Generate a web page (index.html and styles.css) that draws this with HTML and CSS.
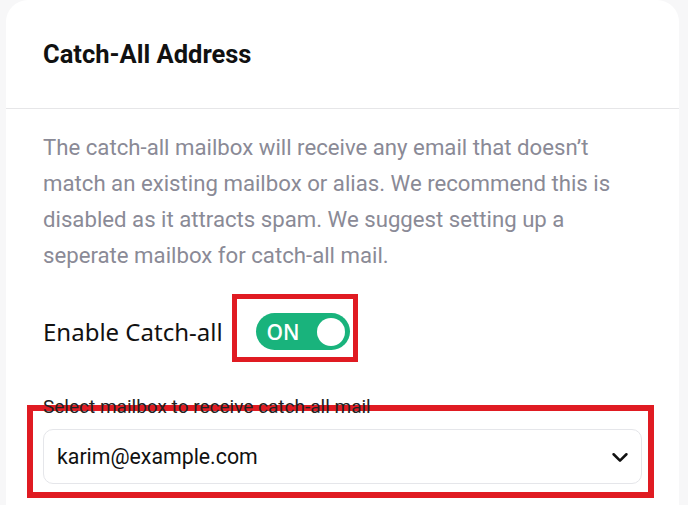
FILE: index.html
```html
<!DOCTYPE html>
<html lang="en">
<head>
<meta charset="utf-8">
<title>Catch-All Address</title>
<link rel="stylesheet" href="styles.css">
</head>
<body>
<div class="page">
  <section class="card">
    <header class="card-header">
      <h2 class="card-title">Catch-All Address</h2>
    </header>
    <div class="card-body">
      <p class="description">The catch-all mailbox will receive any email that doesn’t match an existing mailbox or alias. We recommend this is disabled as it attracts spam. We suggest setting up a seperate mailbox for catch-all mail.</p>
      <div class="toggle-row">
        <span class="toggle-label">Enable Catch-all</span>
        <button class="toggle" type="button" aria-pressed="true">
          <span class="toggle-text">ON</span>
          <span class="toggle-knob"></span>
        </button>
      </div>
      <label class="select-label" for="mailbox">Select mailbox to receive catch-all mail</label>
      <div class="select" id="mailbox">
        <span class="select-value">karim@example.com</span>
        <svg class="chevron" width="22" height="22" viewBox="0 0 24 24" aria-hidden="true"><path d="M5 9l7 7 7-7" fill="none" stroke="#111" stroke-width="2.8" stroke-linecap="round" stroke-linejoin="round"/></svg>
      </div>
    </div>
    <div class="highlight highlight-toggle"></div>
    <div class="highlight highlight-select"></div>
  </section>
</div>
</body>
</html>
```
FILE: styles.css
```css
html, body {
  margin: 0;
  padding: 0;
  height: 505px;
  overflow: hidden;
  background: #f7f7f8;
}
.page {
  padding: 0 9px 0 6px;
  height: 505px;
}
.card {
  position: relative;
  background: #ffffff;
  border-radius: 22px 22px 0 0;
  height: 505px;
  font-family: Roboto, "Liberation Sans", sans-serif;
}
.card-header {
  display: flex;
  align-items: center;
  padding: 0 37px;
  border-bottom: 1px solid #e6e6e8;
  box-sizing: border-box;
  height: 109px;
}
.card-title {
  margin: 0;
  font-size: 25.5px;
  font-weight: 700;
  color: #111;
}
.card-body {
  padding: 20px 37px 0;
}
.description {
  margin: 0;
  max-width: 575px;
  font-size: 22.2px;
  line-height: 36px;
  color: #8a8a96;
}
.toggle-row {
  display: flex;
  align-items: center;
  margin-top: 40px;
  gap: 33px;
}
.toggle-label {
  font-family: "Noto Sans", "Open Sans", sans-serif;
  font-size: 24px;
  color: #111;
}
.toggle {
  width: 94px;
  height: 37px;
  border: none;
  border-radius: 19px;
  background: #19b37c;
  display: flex;
  align-items: center;
  justify-content: space-between;
  padding: 0 5px 0 11px;
  box-sizing: border-box;
}
.toggle-text {
  font-family: "Open Sans", "Noto Sans", sans-serif;
  font-size: 21px;
  font-weight: 600;
  color: #fff;
}
.toggle-knob {
  width: 28px;
  height: 28px;
  border-radius: 50%;
  background: #fff;
}
.select-label {
  position: relative;
  z-index: 2;
  display: block;
  margin-top: 47px;
  font-size: 19px;
  line-height: 20px;
  color: #222;
}
.select {
  margin-top: 12px;
  height: 55px;
  border: 1px solid #e5e6ea;
  border-radius: 10px;
  display: flex;
  align-items: center;
  justify-content: space-between;
  padding: 0 10px 0 13px;
  box-sizing: border-box;
}
.select-value {
  font-size: 21.3px;
  color: #111;
}
.chevron {
  display: block;
}
.highlight {
  position: absolute;
  border: 5px solid #e01b22;
  box-sizing: border-box;
  z-index: 1;
}
.highlight-toggle {
  left: 226px;
  top: 294px;
  width: 126px;
  height: 68px;
}
.highlight-select {
  left: 21px;
  top: 405px;
  width: 627px;
  height: 93px;
  border-width: 6px;
}
```
